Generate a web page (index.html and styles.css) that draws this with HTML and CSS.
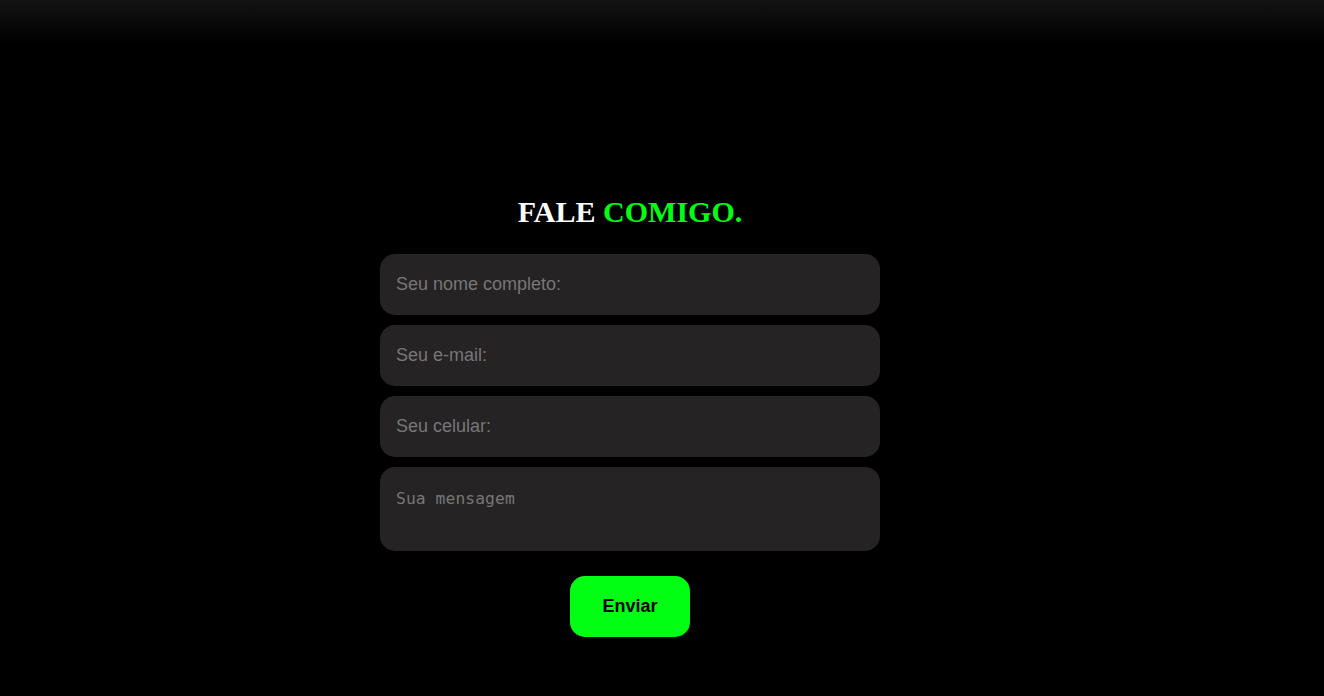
FILE: index.html
```html
<!DOCTYPE html>
<html lang="pt-BR">
<head>
<meta charset="utf-8">
<title>Fale comigo</title>
<link rel="stylesheet" href="styles.css">
</head>
<body>
<main class="page">
  <section class="contact">
    <h1 class="title">FALE <span class="accent">COMIGO.</span></h1>
    <form class="form">
      <input class="field" type="text" placeholder="Seu nome completo:">
      <input class="field" type="email" placeholder="Seu e-mail:">
      <input class="field" type="tel" placeholder="Seu celular:">
      <textarea class="field message" placeholder="Sua mensagem"></textarea>
      <button class="send" type="button">Enviar</button>
    </form>
  </section>
</main>
</body>
</html>
```
FILE: styles.css
```css
* { box-sizing: border-box; }
html, body { margin: 0; height: 100%; }
body {
  background: linear-gradient(#131313 0, #050505 30px, #000 45px) no-repeat, #000;
  font-family: "Liberation Sans", Arial, sans-serif;
}
.page {
  padding: 195px 64px 0 0;
}
.contact {
  display: flex;
  flex-direction: column;
  align-items: center;
}
.title {
  margin: 0 0 25px;
  font-family: "Liberation Serif", "Times New Roman", serif;
  font-weight: bold;
  font-size: 30px;
  line-height: 34px;
  color: #fff;
}
.accent { color: #00ff12; }
.form {
  width: 500px;
  display: flex;
  flex-direction: column;
  align-items: center;
  gap: 10px;
}
.field {
  width: 100%;
  height: 61px;
  border: none;
  outline: none;
  border-radius: 15px;
  background: #252324;
  padding: 0 16px;
  font-family: "Liberation Sans", Arial, sans-serif;
  font-size: 18px;
  color: #ddd;
}
.field::placeholder { color: #777; }
.message {
  height: 84px;
  padding: 22px 16px;
  resize: none;
  font-family: "DejaVu Sans Mono", monospace;
  font-size: 16.3px;
  letter-spacing: 0.1px;
}
.send {
  margin-top: 15px;
  width: 120px;
  height: 61px;
  border: none;
  border-radius: 15px;
  background: #00ff12;
  color: #000;
  font-family: "Liberation Sans", Arial, sans-serif;
  font-weight: bold;
  font-size: 18px;
  cursor: pointer;
}
```
